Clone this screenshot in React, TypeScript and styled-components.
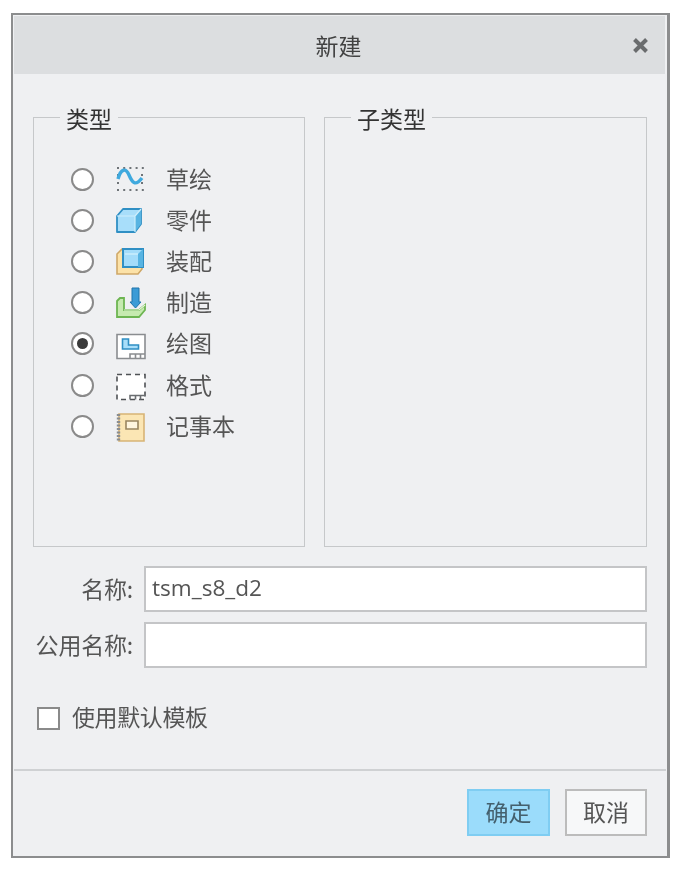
import { createGlobalStyle, styled } from "styled-components";
import { ReactNode } from "react";

const GlobalStyle = createGlobalStyle`
  html, body { margin: 0; padding: 0; background: #fff; }
  body { font-family: "Liberation Sans", "Noto Sans CJK SC", sans-serif; color: #555; }
  * { box-sizing: border-box; }
`;

const cjk = `"Noto Sans CJK SC", sans-serif`;

const Page = styled.div`
  padding: 13px 0 0 11px;
  width: 678px;
  height: 871px;
`;

const Dialog = styled.div`
  width: 659px;
  height: 845px;
  border: 2px solid #8c8d8e;
  border-right-width: 3px;
  background: #eff0f2;
  display: flex;
  flex-direction: column;
  filter: blur(0.4px);
`;

const TitleBar = styled.div`
  height: 58px;
  margin-top: 1px;
  margin-left: 1px;
  margin-right: 2px;
  padding-right: 2px;
  background: #dcdee0;
  display: flex;
  align-items: center;
  justify-content: center;
  position: relative;
  font: 400 23px/1 ${cjk};
  color: #424242;
`;

const CloseButton = styled.svg`
  position: absolute;
  right: 16px;
  top: 21px;
  width: 17px;
  height: 17px;
`;

const Body = styled.div`
  flex: 1;
  padding: 30px 20px 0 20px;
  display: flex;
  flex-direction: column;
`;

const Groups = styled.div`
  display: flex;
  gap: 19px;
  height: 443px;
`;

const Group = styled.fieldset<{ $width: number }>`
  width: ${(p) => p.$width}px;
  margin: 0;
  padding: 0;
  border: 1.5px solid #c6c8ca;
  min-width: 0;
`;

const Legend = styled.legend`
  margin-left: 26px;
  padding: 2px 6px 0;
  font: 400 23px/24px ${cjk};
  color: #333;
`;

const TypeList = styled.div`
  display: flex;
  flex-direction: column;
  padding: 28.5px 0 0 37px;
`;

const TypeRow = styled.div`
  height: 41.2px;
  display: flex;
  align-items: center;
`;

const Radio = styled.span<{ $checked?: boolean }>`
  width: 23px;
  height: 23px;
  border-radius: 50%;
  border: 2px solid #8a8a8a;
  background: #fff;
  display: flex;
  align-items: center;
  justify-content: center;
  &::after {
    content: "";
    display: ${(p) => (p.$checked ? "block" : "none")};
    width: 11px;
    height: 11px;
    border-radius: 50%;
    background: #3a3a3a;
  }
`;

const IconBox = styled.svg`
  width: 30px;
  height: 30px;
  margin-left: 22px;
  overflow: visible;
`;

const TypeLabel = styled.span`
  margin-left: 20px;
  margin-bottom: 2px;
  font: 400 23px/1 ${cjk};
  color: #555;
`;

const FormRows = styled.div`
  margin-top: 19px;
  display: flex;
  flex-direction: column;
  gap: 10px;
`;

const FormRow = styled.div`
  display: flex;
  align-items: center;
  gap: 11px;
`;

const FieldLabel = styled.label`
  width: 101px;
  margin-left: -1px;
  margin-bottom: 1px;
  text-align: right;
  white-space: nowrap;
  font: 400 23px/1 ${cjk};
  letter-spacing: -0.2px;
  color: #555;
`;

const TextField = styled.div`
  width: 503px;
  height: 46px;
  background: #fff;
  border: 2px solid #c4c5c7;
  padding-left: 6px;
  padding-bottom: 2px;
  display: flex;
  align-items: center;
  font: 400 22.6px/1 "Open Sans", sans-serif;
  color: #555;
`;

const CheckRow = styled.div`
  margin-top: 37px;
  margin-left: 4px;
  display: flex;
  align-items: center;
  gap: 12px;
`;

const CheckBox = styled.span`
  width: 23px;
  height: 23px;
  background: #fff;
  border: 2px solid #8a8a8a;
`;

const CheckLabel = styled.span`
  margin-bottom: 3px;
  font: 400 23px/1 ${cjk};
  letter-spacing: -0.4px;
  color: #555;
`;

const Divider = styled.div`
  height: 2px;
  background: #cfd1d3;
  margin: 38px -19px 0 -19px;
`;

const Footer = styled.div`
  display: flex;
  justify-content: flex-end;
  gap: 15px;
  padding: 18px 0 0 0;
`;

const Button = styled.button<{ $primary?: boolean }>`
  width: ${(p) => (p.$primary ? 83 : 82)}px;
  height: 47px;
  padding: 0 0 3px;
  border: 2px solid ${(p) => (p.$primary ? "#7fcdf2" : "#bcbcbc")};
  background: ${(p) => (p.$primary ? "#9bdcfb" : "#f7f8f9")};
  font: 400 23px/1 ${cjk};
  color: ${(p) => (p.$primary ? "#44606e" : "#555")};
`;

function Icon({ children }: { children: ReactNode }) {
  return (
    <IconBox viewBox="0 0 30 30" fill="none">
      {children}
    </IconBox>
  );
}

const SketchIcon = (
  <Icon>
    <path
      d="M1 4h27M1 26h27"
      stroke="#6f7478"
      strokeWidth="2"
      strokeDasharray="2 4.200"
    />
    <path d="M1 11h2M1 19h2M25 11h2M25 19h2" stroke="#6f7478" strokeWidth="2" strokeDasharray="2 4" />
    <path d="M2 15c3-11 8-11 11-4s6 12 13 3" stroke="#3fa9de" strokeWidth="3.400" />
  </Icon>
);

const PartIcon = (
  <Icon>
    <path d="M1 11 7 4h18v15l-6 8H1z" fill="#a8defa" stroke="#2f8fc4" strokeWidth="1.800" strokeLinejoin="round" />
    <path d="M19 11l6-7v15l-6 8z" fill="#58b4e2" />
    <path d="M1 11h18v16M19 11l6-7" stroke="#cdeefc" strokeWidth="1.200" />
  </Icon>
);

const AssemblyIcon = (
  <Icon>
    <path d="M1 8l5-5h8v17h12v3l-4 5H1z" fill="#fce2a8" stroke="#cfa868" strokeWidth="1.600" />
    <path d="M7 3h20v18H7z" fill="#a3dcfa" stroke="#2f8fc4" strokeWidth="2" />
    <path d="M22 21V8l5-5v18z" fill="#58b4e2" />
    <path d="M9 8h13" stroke="#cdeefc" strokeWidth="1.400" />
  </Icon>
);

const ManufactureIcon = (
  <Icon>
    <path
      d="M1 13l3-3h4v12h15l6-5v5l-6 7H1z"
      fill="#c6eab0"
      stroke="#6db552"
      strokeWidth="1.800"
    />
    <path d="M8 22h15l6-5" stroke="#e6f7d8" strokeWidth="1.200" />
    <path d="M16 0h7v14h2l-5.500 6-5.500-6h2z" fill="#3b9bd6" stroke="#1e74ab" strokeWidth="1" />
  </Icon>
);

const DrawingIcon = (
  <Icon>
    <path d="M1 5.500h28v24H1z" fill="#fff" stroke="#8a8d90" strokeWidth="1.600" />
    <path d="M6.500 10h6v6h10v4h-16z" fill="#a8defa" stroke="#2f8fc4" strokeWidth="1.600" />
    <path d="M14 29v-4h15M19.500 25v4M24.500 25v4" stroke="#8a8d90" strokeWidth="1.600" />
  </Icon>
);

const FormatIcon = (
  <Icon>
    <path d="M1 4.500h28v25H1z" fill="#fff" stroke="#4f5255" strokeWidth="1.600" strokeDasharray="5 4" />
    <path d="M14 29.500v-4h15M19.500 25.500v4M24.500 25.500v4" stroke="#6a6d70" strokeWidth="1.600" />
  </Icon>
);

const NotebookIcon = (
  <Icon>
    <path d="M3 3h25v27H3z" fill="#fbe6b4" stroke="#d8b476" strokeWidth="1.600" />
    <path d="M2.500 3v27" stroke="#8a8d90" strokeWidth="3.400" strokeDasharray="2 1.500" />
    <path d="M10 10h12v8H10z" fill="#fff6df" stroke="#9a8660" strokeWidth="1.600" />
  </Icon>
);

const types = [
  { label: "草绘", icon: SketchIcon },
  { label: "零件", icon: PartIcon },
  { label: "装配", icon: AssemblyIcon },
  { label: "制造", icon: ManufactureIcon },
  { label: "绘图", icon: DrawingIcon, checked: true },
  { label: "格式", icon: FormatIcon },
  { label: "记事本", icon: NotebookIcon },
];

export default function App() {
  return (
    <>
      <GlobalStyle />
      <Page>
        <Dialog>
          <TitleBar>
            新建
            <CloseButton viewBox="0 0 17 17">
              <path d="M2.500 2.500l12 12M14.500 2.500l-12 12" stroke="#6a6c6e" strokeWidth="4" />
            </CloseButton>
          </TitleBar>
          <Body>
            <Groups>
              <Group $width={272}>
                <Legend>类型</Legend>
                <TypeList>
                  {types.map((t) => (
                    <TypeRow key={t.label}>
                      <Radio $checked={t.checked} />
                      {t.icon}
                      <TypeLabel>{t.label}</TypeLabel>
                    </TypeRow>
                  ))}
                </TypeList>
              </Group>
              <Group $width={323}>
                <Legend>子类型</Legend>
              </Group>
            </Groups>
            <FormRows>
              <FormRow>
                <FieldLabel>名称:</FieldLabel>
                <TextField>tsm_s8_d2</TextField>
              </FormRow>
              <FormRow>
                <FieldLabel>公用名称:</FieldLabel>
                <TextField />
              </FormRow>
            </FormRows>
            <CheckRow>
              <CheckBox />
              <CheckLabel>使用默认模板</CheckLabel>
            </CheckRow>
            <Divider />
            <Footer>
              <Button $primary>确定</Button>
              <Button>取消</Button>
            </Footer>
          </Body>
        </Dialog>
      </Page>
    </>
  );
}
